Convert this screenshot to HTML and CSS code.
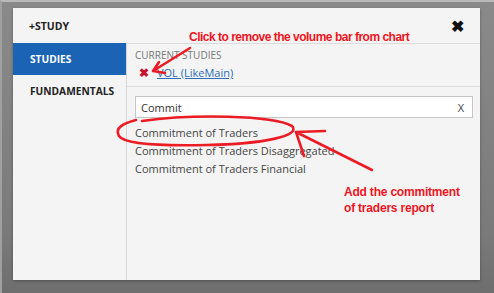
FILE: index.html
```html
<!DOCTYPE html>
<html lang="en">
<head>
    <meta charset="UTF-8">
    <title>Studies</title>
    <link rel="stylesheet" href="styles.css">
</head>
<body>
    <div class="frame">
        <div class="dialog">
            <div class="dialog-header">
                <span class="title">+STUDY</span>
                <span class="close">&#10006;</span>
            </div>
            <div class="dialog-body">
                <div class="sidebar">
                    <div class="tab active">STUDIES</div>
                    <div class="tab">FUNDAMENTALS</div>
                </div>
                <div class="content">
                    <div class="current">
                        <div class="section-label">CURRENT STUDIES</div>
                        <div class="study-row">
                            <span class="remove">&#10006;</span>
                            <a class="study-link" href="#">VOL (LikeMain)</a>
                        </div>
                    </div>
                    <div class="search">
                        <div class="search-box">
                            <span>Commit</span>
                            <span class="clear">X</span>
                        </div>
                        <ul class="results">
                            <li>Commitment of Traders</li>
                            <li>Commitment of Traders Disaggregated</li>
                            <li>Commitment of Traders Financial</li>
                        </ul>
                    </div>
                </div>
            </div>
        </div>

        <!-- red markup drawn over the screenshot -->
        <div class="note note-top">Click to remove the volume bar from chart</div>
        <div class="note note-bottom">Add the commitment<br>of traders report</div>
        <svg class="markup" width="494" height="293" viewBox="0 0 494 293">
            <g fill="none" stroke="#ec1c24" stroke-width="2.6" stroke-linecap="round" stroke-linejoin="round">
                <path d="M188 46 L151 69 M151 69 L157 60 M151 69 L163 71"/>
                <path d="M140 119 C190 112 270 113 290 124 C300 134 260 142 205 143 C160 144 122 142 117 134 C112 126 122 121 134 118"/>
                <path d="M370 168 L294 130 M294 130 L323 129 M294 130 L302 154"/>
            </g>
        </svg>
    </div>
</body>
</html>
```

FILE: styles.css
```css
body {
    margin: 0;
    background-color: #7c7c7c;
    font-family: "Open Sans", Arial, sans-serif;
}
.frame {
    position: relative;
    width: 494px;
    height: 293px;
    box-sizing: border-box;
    padding: 8px 14px 13px 13px;
    background: linear-gradient(#8a8a8a, #7a7a7a 80%, #6e6e6e);
    border-top: 2px solid #b9b9b9;
    border-left: 2px solid #a0a0a0;
}
.dialog {
    display: flex;
    flex-direction: column;
    height: 272px;
    margin-top: -2px;
    margin-left: -2px;
    background-color: #f4f4f4;
    box-shadow: 0 1px 3px rgba(0, 0, 0, 0.3);
}
.dialog-header {
    display: flex;
    justify-content: space-between;
    align-items: center;
    height: 35px;
    padding: 0 16px 0 16px;
}
.title {
    font-size: 10.5px;
    font-weight: bold;
    color: #222;
}
.close {
    font-size: 16px;
    font-weight: bold;
    color: #111;
}
.dialog-body {
    display: flex;
    flex: 1;
}
.sidebar {
    width: 113px;
    border-right: 1px solid #d6d6d6;
}
.tab {
    height: 32px;
    line-height: 32px;
    padding-left: 17px;
    font-size: 10.2px;
    font-weight: bold;
    color: #222;
}
.tab.active {
    background-color: #1a63b5;
    color: #fff;
}
.content {
    flex: 1;
    border-top: 1px solid #dcdcdc;
}
.current {
    height: 43px;
    padding: 4px 8px 0;
    box-sizing: border-box;
    border-bottom: 1px solid #dcdcdc;
}
.section-label {
    font-size: 10px;
    color: #777;
    line-height: 14px;
}
.study-row {
    display: flex;
    align-items: center;
    gap: 8px;
    padding-left: 4px;
    margin-top: 2px;
}
.remove {
    font-size: 12px;
    font-weight: bold;
    color: #c8102e;
}
.study-link {
    font-size: 11px;
    color: #2b6cb5;
}
.search {
    padding: 9px 7px 0 8px;
}
.search-box {
    display: flex;
    justify-content: space-between;
    align-items: center;
    height: 20px;
    padding: 0 8px 0 5px;
    background-color: #fff;
    border: 1px solid #c6c6c6;
    font-size: 11px;
    color: #333;
}
.clear {
    font-size: 11px;
    color: #444;
}
.results {
    list-style: none;
    margin: 6px 0 0;
    padding: 0;
}
.results li {
    font-size: 11px;
    line-height: 18px;
    color: #444;
}
.note {
    position: absolute;
    font-family: "Liberation Sans", Arial, sans-serif;
    font-weight: bold;
    font-size: 12px;
    color: #f0141e;
}
.note-top {
    left: 187px;
    top: 28px;
    letter-spacing: -0.5px;
}
.note-bottom {
    left: 342px;
    top: 182px;
    line-height: 16px;
    letter-spacing: -0.2px;
}
.markup {
    position: absolute;
    left: 0;
    top: 0;
}
```
